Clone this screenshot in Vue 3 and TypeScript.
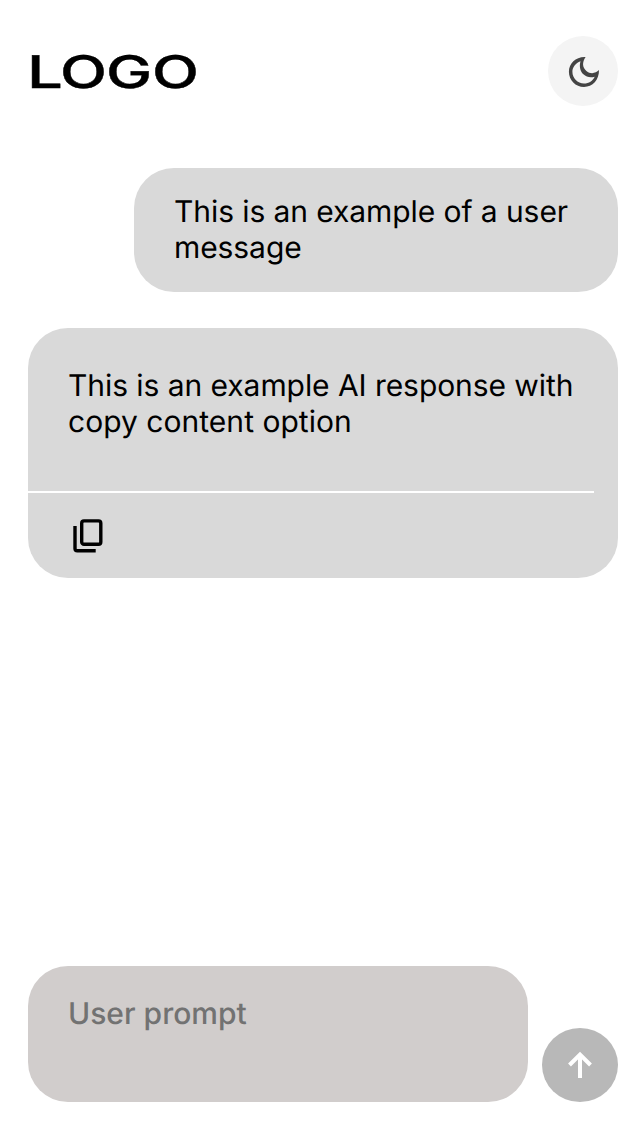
<script setup lang="ts">
interface LogoLetter {
  char: string
  x: number
  scale: number
}

const logo: LogoLetter[] = [
  { char: 'L', x: -1, scale: 1.41 },
  { char: 'O', x: 32, scale: 1.36 },
  { char: 'G', x: 78, scale: 1.37 },
  { char: 'O', x: 124, scale: 1.36 },
]

const userMessage = 'This is an example of a user message'
const aiMessage = 'This is an example AI response with copy content option'
</script>

<template>
  <main class="chat">
    <header class="header">
      <svg class="logo" width="172" height="44" viewBox="0 0 172 44">
        <text
          v-for="(letter, i) in logo"
          :key="i"
          :transform="`translate(${letter.x} 38) scale(${letter.scale} 1)`"
        >{{ letter.char }}</text>
      </svg>
      <button class="theme" aria-label="Dark mode">
        <svg width="70" height="70" viewBox="0 0 70 70">
          <path
            d="M37.6 21C28.2 20.4 20.9 27.3 20.9 35.8C20.9 44.3 27.6 51 36 51C44.6 51 51.2 43.9 51 34.1C47.6 37.6 42.4 38.4 38.4 35C34.4 31.5 33.9 26.5 37.6 21ZM32.5 25.2C31 30.2 32.2 35.3 35.4 38.3C38.4 41.1 42.4 42 46.7 40.7C44.8 44.9 41 47.5 36 47.5C29.6 47.5 24.4 42.4 24.4 35.8C24.4 31.1 27.6 27 32.5 25.2Z"
            fill="#444" fill-rule="evenodd"
          />
        </svg>
      </button>
    </header>

    <section class="messages">
      <div class="bubble user">{{ userMessage }}</div>
      <article class="bubble ai">
        <p class="answer">{{ aiMessage }}</p>
        <div class="divider"></div>
        <button class="copy" aria-label="Copy">
          <svg width="32" height="36" viewBox="0 0 32 36" fill="none" stroke="#000" stroke-width="3.4">
            <rect x="9.7" y="2.9" width="19.1" height="23.4" rx="2.3" />
            <path d="M3 8V30.5Q3 32.8 5.3 32.8H23.7" />
          </svg>
        </button>
      </article>
    </section>

    <form class="composer" @submit.prevent>
      <div class="prompt">User prompt</div>
      <button class="send" aria-label="Send">
        <svg width="76" height="74" viewBox="0 0 76 74" fill="none" stroke="#fff" stroke-width="4">
          <path d="M38 50V27M27.5 37L38 26.5L48.5 37" />
        </svg>
      </button>
    </form>
  </main>
</template>

<style>
body {
  margin: 0;
  background: #fff;
}
</style>

<style scoped>
.chat {
  box-sizing: border-box;
  width: 640px;
  height: 1136px;
  padding: 36px 22px 34px 28px;
  display: flex;
  flex-direction: column;
  font-family: Inter, "Liberation Sans", sans-serif;
  font-size: 30px;
  line-height: 36px;
  text-rendering: geometricPrecision;
  color: #000;
  background: #fff;
}

button {
  padding: 0;
  border: 0;
  background: none;
}

svg {
  display: block;
}

.header {
  display: flex;
  align-items: flex-start;
  justify-content: space-between;
  height: 70px;
}

.logo {
  margin-top: 14px;
  overflow: visible;
  font-size: 45px;
  font-weight: 500;
  stroke: #000;
  stroke-width: 0.4px;
}

.theme {
  width: 70px;
  height: 70px;
  border-radius: 50%;
  background: #f4f4f4;
}

.messages {
  display: flex;
  flex: 1;
  flex-direction: column;
  gap: 36px;
  margin-top: 62px;
}

.bubble {
  box-sizing: border-box;
  border-radius: 40px;
  background: #d9d9d9;
}

.user {
  align-self: flex-end;
  width: 484px;
  height: 124px;
  padding: 26px 40px;
  letter-spacing: -0.08px;
}

.ai {
  height: 250px;
  padding-top: 40px;
}

.answer {
  height: 123px;
  margin: 0;
  padding: 0 40px;
  letter-spacing: 0.03px;
}

.answer::first-line {
  letter-spacing: -0.06px;
}

.divider {
  width: 566px;
  height: 2px;
  background: #fff;
}

.copy {
  margin: 25px 0 0 44px;
}

.composer {
  display: flex;
  align-items: flex-end;
  gap: 14px;
}

.prompt {
  box-sizing: border-box;
  width: 500px;
  height: 136px;
  padding: 30px 40px;
  border-radius: 40px;
  color: #727272;
  background: #d1cdcc;
  font-weight: 500;
}

.send {
  width: 76px;
  height: 74px;
  border-radius: 50%;
  background: #b8b8b8;
}
</style>
